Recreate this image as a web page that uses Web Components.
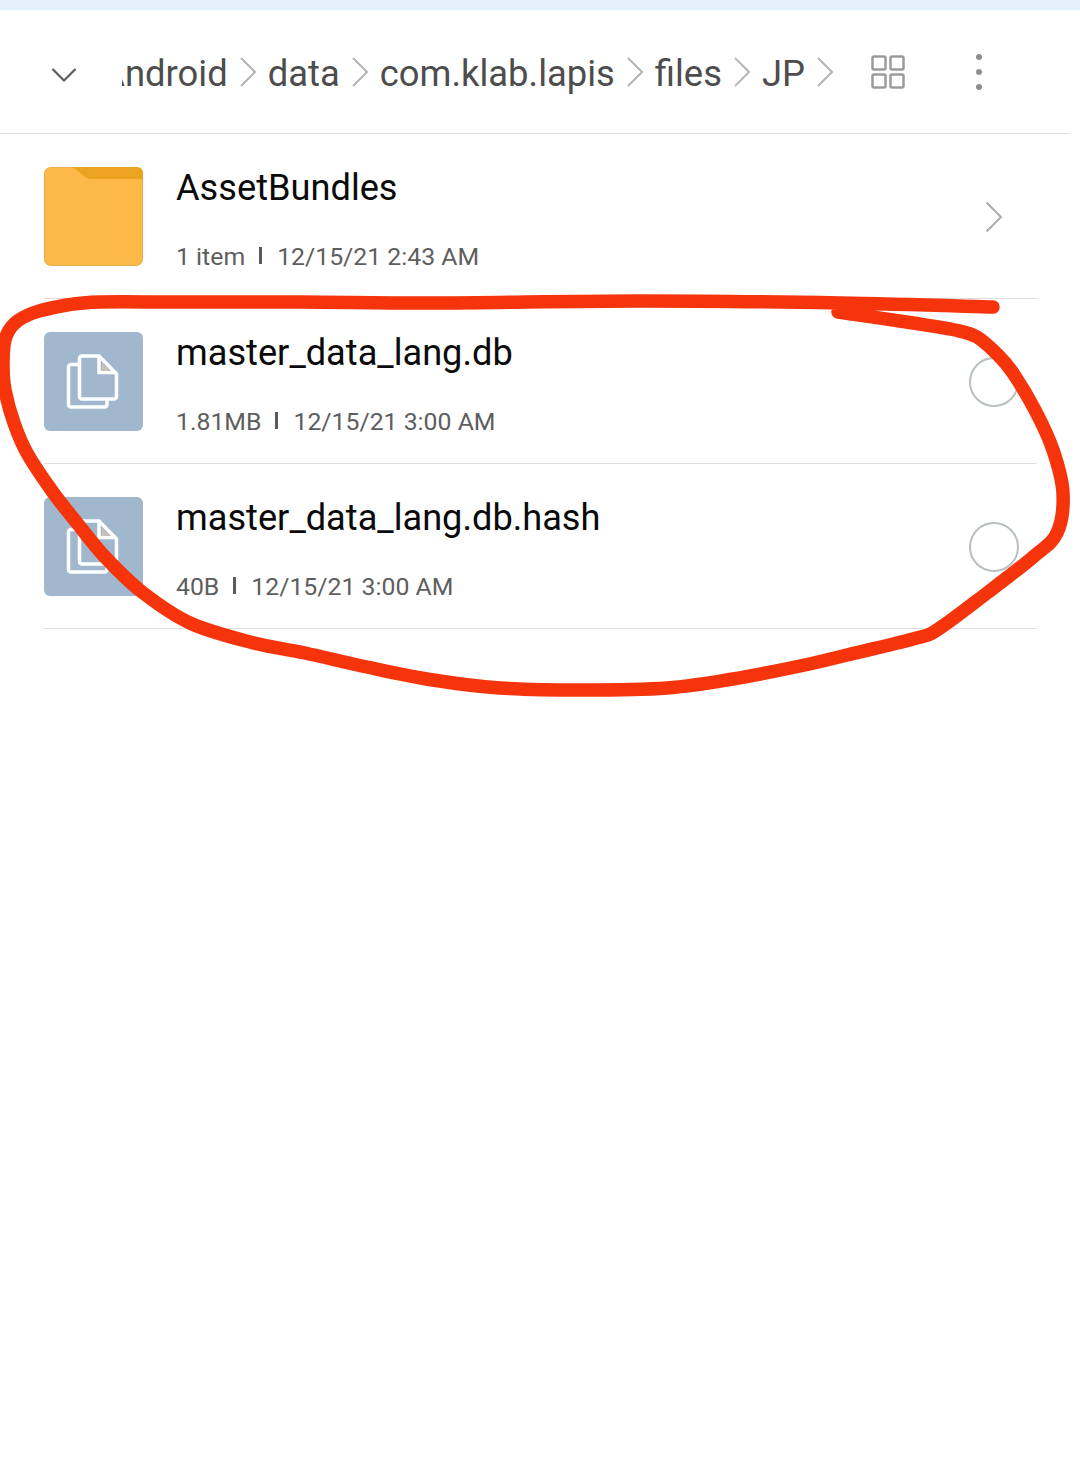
<!DOCTYPE html>
<html>
<head>
<meta charset="utf-8">
<title>Files</title>
<style>
    html, body { margin: 0; background: #fff; }
    body { font-family: Roboto, "Liberation Sans", sans-serif; }
</style>
</head>
<body>
<file-screen>
    <path-bar path="Android,data,com.klab.lapis,files,JP"></path-bar>
    <file-row name="AssetBundles" size="1 item" date="12/15/21 2:43 AM" kind="folder"></file-row>
    <file-row name="master_data_lang.db" size="1.81MB" date="12/15/21 3:00 AM" kind="file"></file-row>
    <file-row name="master_data_lang.db.hash" size="40B" date="12/15/21 3:00 AM" kind="file"></file-row>
</file-screen>

<script>
// 1. Icons
const chevron = `<svg width="16" height="30" viewBox="0 0 16 30" fill="none"><path d="M1 1 15 15 1 29" stroke="#b4b4b4" stroke-width="2"/></svg>`;

const folderIcon = `<svg width="99" height="99" viewBox="0 0 99 99" style="display:block">
    <rect x=".5" y=".5" width="98" height="98" rx="6" fill="#fcb947" stroke="#e8ad4c"/>
    <path d="M29 0H93a6 6 0 0 1 6 6V12H47Q44 12 41 10Z" fill="#eca31f"/>
</svg>`;

const fileIcon = `<svg width="99" height="99" viewBox="0 0 99 99" style="display:block">
    <rect width="99" height="99" rx="6" fill="#a1b7cd"/>
    <path d="M34 32.500H27a2.500 2.500 0 0 0-2.500 2.500V72.500a2.500 2.500 0 0 0 2.500 2.500H60.500a2.500 2.500 0 0 0 2.500-2.500V68" fill="none" stroke="#fff" stroke-width="3.500"/>
    <path d="M35.500 26.500a2.500 2.500 0 0 1 2.500-2.500H55L72.500 42V64.500a2.500 2.500 0 0 1-2.500 2.500H38a2.500 2.500 0 0 1-2.500-2.500Z" fill="none" stroke="#fff" stroke-width="3.500" stroke-linejoin="round"/>
    <path d="M55 24V40.500H72.500" fill="none" stroke="#fff" stroke-width="3.500"/>
    <path d="M58 30.500 66 38.700H58Z" fill="#c8bfb5"/>
</svg>`;

// 2. Hand-drawn ring: points read off the stroke, smoothed into one curve
const ringPoints = [
    [993, 307], [840, 303], [640, 301], [440, 303], [300, 302], [180, 302], [100, 302], [67, 305], [33, 313],
    [14, 324], [5, 340], [3, 365], [5, 390], [14, 423], [27, 453], [52, 491], [77, 523], [105, 557], [142, 592],
    [190, 623], [250, 642], [305, 653], [367, 667], [433, 680], [500, 688], [583, 690], [667, 688], [733, 679],
    [800, 666], [847, 655], [913, 639], [937, 630], [987, 593], [1033, 557], [1057, 533], [1063, 493], [1053, 450],
    [1035, 410], [1013, 373], [998, 355], [977, 337], [955, 330], [913, 323], [838, 312]
];

function smoothPath(points) {
    let d = `M${points[0][0]} ${points[0][1]}`;
    for (let i = 0; i < points.length - 1; i++) {
        const p0 = points[Math.max(i - 1, 0)];
        const p1 = points[i];
        const p2 = points[i + 1];
        const p3 = points[Math.min(i + 2, points.length - 1)];
        const c1 = [p1[0] + (p2[0] - p0[0]) / 6, p1[1] + (p2[1] - p0[1]) / 6];
        const c2 = [p2[0] - (p3[0] - p1[0]) / 6, p2[1] - (p3[1] - p1[1]) / 6];
        d += `C${c1[0]} ${c1[1]} ${c2[0]} ${c2[1]} ${p2[0]} ${p2[1]}`;
    }
    return d;
}

// 3. Web Components
class FileScreen extends HTMLElement {
    constructor() {
        super();
        this.attachShadow({ mode: 'open' });
        this.shadowRoot.innerHTML = `
            <style>
                :host {
                    display: block;
                    position: relative;
                    width: 1080px;
                    height: 1476px;
                    overflow: hidden;
                    background: #fff;
                }
                .strip { height: 10px; background: #e3f1fc; }
                .mark { position: absolute; left: 0; top: 0; pointer-events: none; }
            </style>
            <div class="strip"></div>
            <slot></slot>
            <svg class="mark" width="1080" height="1476" viewBox="0 0 1080 1476" fill="none">
                <path d="${smoothPath(ringPoints)}" stroke="#f6340c" stroke-width="13.500" stroke-linecap="round" stroke-linejoin="round"/>
            </svg>
        `;
    }
}
customElements.define('file-screen', FileScreen);

class PathBar extends HTMLElement {
    constructor() {
        super();
        this.attachShadow({ mode: 'open' });
        const crumbs = this.getAttribute('path').split(',')
            .map(part => `<span>${part}</span>${chevron}`)
            .join('');
        this.shadowRoot.innerHTML = `
            <style>
                :host {
                    display: flex;
                    align-items: center;
                    box-sizing: border-box;
                    width: 1069px;
                    height: 124px;
                    border-bottom: 1px solid #dedede;
                    color: #4d4d4d;
                    font: 36.400px/44px Roboto, sans-serif;
                }
                .back { margin-left: 51px; width: 71px; height: 22px; flex: none; }
                .back svg { display: block; }
                .crumbs {
                    display: flex;
                    align-items: center;
                    justify-content: flex-end;
                    gap: 12px;
                    width: 711px;
                    flex: none;
                    overflow: hidden;
                    white-space: nowrap;
                }
                .crumbs svg { flex: none; }
                .crumbs span { flex: none; position: relative; top: 2px; }
                .grid { margin-left: 38px; flex: none; }
                .more { margin-left: 70px; flex: none; }
            </style>
            <div class="back">
                <svg width="26" height="22" viewBox="0 0 26 22" fill="none"><path d="M1.500 8 13 19.500 24.500 8" stroke="#5c5c5c" stroke-width="2.200"/></svg>
            </div>
            <div class="crumbs">${crumbs}</div>
            <svg class="grid" width="34" height="34" viewBox="0 0 34 34" fill="none" stroke="#9b9b9b" stroke-width="2.500">
                <rect x="1.500" y="1.500" width="13" height="13" rx="1.500"/>
                <rect x="19.500" y="1.500" width="13" height="13" rx="1.500"/>
                <rect x="1.500" y="19.500" width="13" height="13" rx="1.500"/>
                <rect x="19.500" y="19.500" width="13" height="13" rx="1.500"/>
            </svg>
            <svg class="more" width="8" height="38" viewBox="0 0 8 38" fill="#8e8e8e">
                <circle cx="4" cy="4" r="3"/><circle cx="4" cy="19" r="3"/><circle cx="4" cy="34" r="3"/>
            </svg>
        `;
    }
}
customElements.define('path-bar', PathBar);

class FileRow extends HTMLElement {
    constructor() {
        super();
        this.attachShadow({ mode: 'open' });
        const isFolder = this.getAttribute('kind') === 'folder';
        const trailing = isFolder
            ? `<svg class="go" width="18" height="32" viewBox="0 0 18 32" fill="none"><path d="M1.500 1.500 16 16 1.500 30.500" stroke="#ababab" stroke-width="2"/></svg>`
            : `<span class="pick"></span>`;
        this.shadowRoot.innerHTML = `
            <style>
                :host {
                    display: block;
                    box-sizing: border-box;
                    height: 165px;
                    padding: 33px 0 0 44px;
                    font-family: Roboto, sans-serif;
                }
                .row {
                    display: flex;
                    box-sizing: border-box;
                    width: 993px;
                    height: 132px;
                    border-bottom: 1px solid #dedede;
                }
                .thumb { flex: none; width: 99px; height: 99px; }
                .text { flex: 1; margin-left: 33px; min-width: 0; }
                .name { height: 44px; margin-top: -1px; font-size: 36.200px; line-height: 44px; color: #0a0a0a; white-space: nowrap; }
                .meta {
                    display: flex;
                    align-items: center;
                    margin-top: 31px;
                    height: 32px;
                    font-size: 24.800px;
                    line-height: 32px;
                    color: #5e5e5e;
                    white-space: nowrap;
                }
                .sep { width: 3px; height: 17px; margin: 0 15px 4px 14px; background: #5a5a5a; }
                .go { flex: none; margin: 34px 34px 0 0; }
                .pick {
                    flex: none;
                    box-sizing: border-box;
                    width: 50px;
                    height: 50px;
                    margin: 25px 18px 0 0;
                    border: 2px solid #b7bfbf;
                    border-radius: 50%;
                }
            </style>
            <div class="row">
                <div class="thumb">${isFolder ? folderIcon : fileIcon}</div>
                <div class="text">
                    <div class="name">${this.getAttribute('name')}</div>
                    <div class="meta"><span>${this.getAttribute('size')}</span><span class="sep"></span><span>${this.getAttribute('date')}</span></div>
                </div>
                ${trailing}
            </div>
        `;
    }
}
customElements.define('file-row', FileRow);
</script>
</body>
</html>
